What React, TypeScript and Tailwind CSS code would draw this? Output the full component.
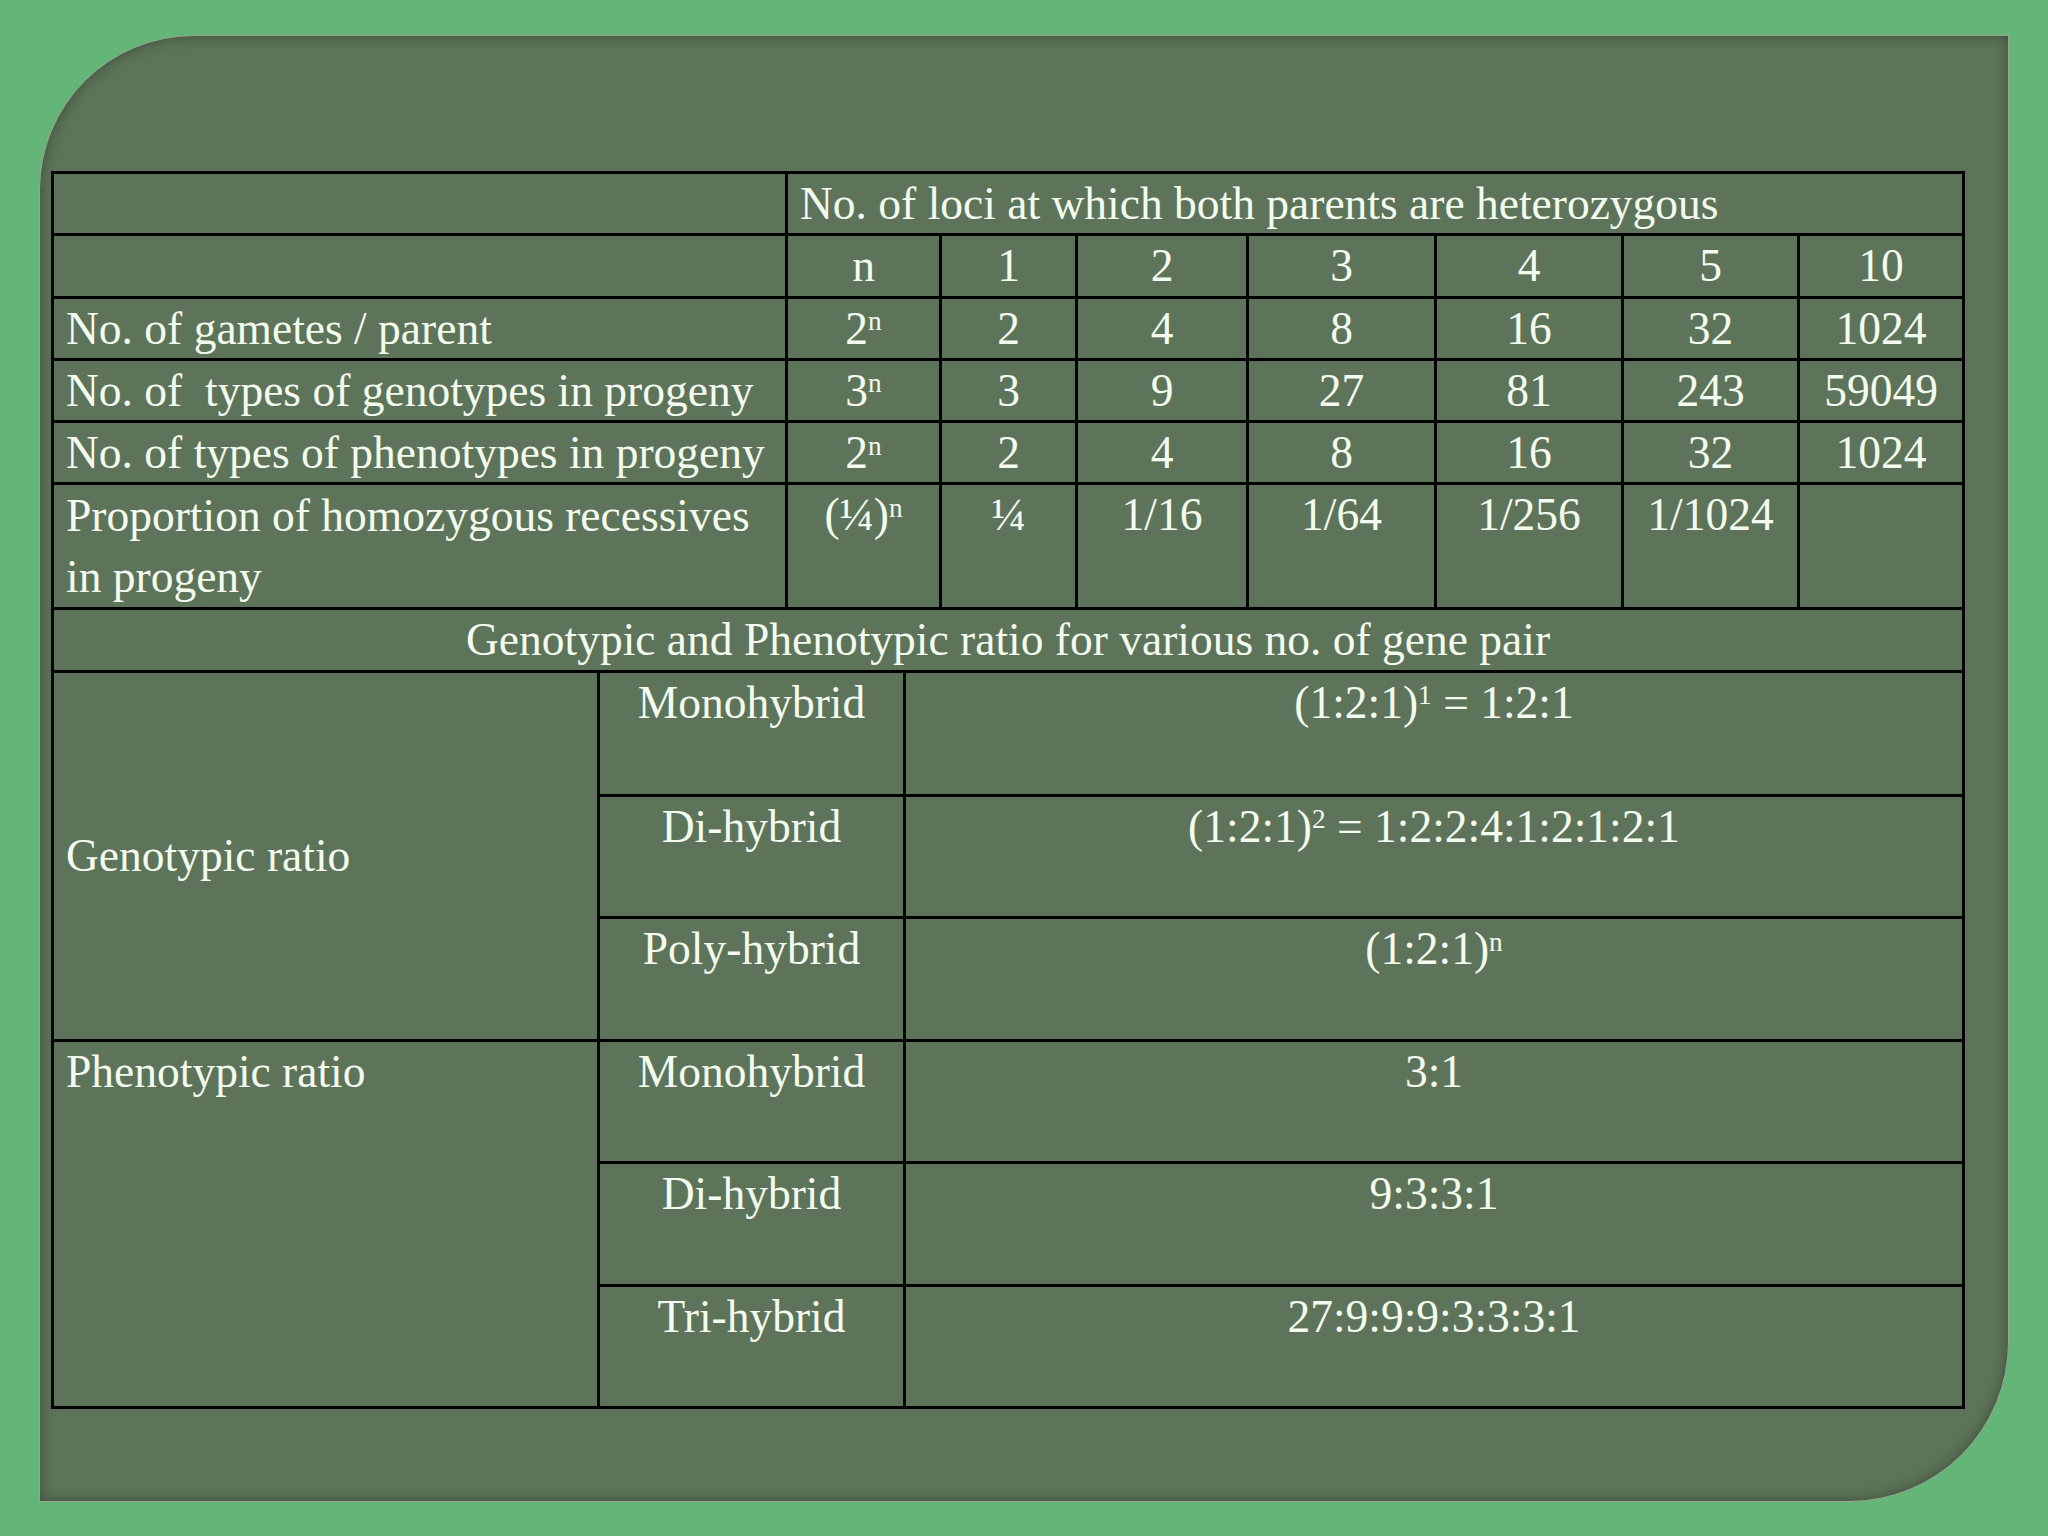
const topCols = [734, 154, 136, 171, 188, 187, 176, 165];
const bottomCols = [546, 306, 1059];

const cell = 'border-[3px] border-black p-0';

function Sup({ children }: { children: React.ReactNode }) {
	return <sup className="text-[0.6em]">{children}</sup>;
}

const dataRows: { label: React.ReactNode; values: React.ReactNode[] }[] = [
	{
		label: 'No. of gametes / parent',
		values: [<>2<Sup>n</Sup></>, '2', '4', '8', '16', '32', '1024'],
	},
	{
		label: 'No. of \u00a0types of genotypes in progeny',
		values: [<>3<Sup>n</Sup></>, '3', '9', '27', '81', '243', '59049'],
	},
	{
		label: 'No. of types of phenotypes in progeny',
		values: [<>2<Sup>n</Sup></>, '2', '4', '8', '16', '32', '1024'],
	},
];

const ratioRows = [
	{
		group: 'Genotypic ratio',
		items: [
			['Monohybrid', <>(1:2:1)<Sup>1</Sup> = 1:2:1</>],
			['Di-hybrid', <>(1:2:1)<Sup>2</Sup> = 1:2:2:4:1:2:1:2:1</>],
			['Poly-hybrid', <>(1:2:1)<Sup>n</Sup></>],
		],
	},
	{
		group: 'Phenotypic ratio',
		items: [
			['Monohybrid', '3:1'],
			['Di-hybrid', '9:3:3:1'],
			['Tri-hybrid', '27:9:9:9:3:3:3:1'],
		],
	},
];

export default function App() {
	return (
		<div
			className="h-[1536px] w-[2048px] bg-[#63b578] pb-[34px] pl-[39px] pr-[39px] pt-[35px] font-['Liberation_Serif',serif]"
			style={{ fontFamily: '"Liberation Serif", "Times New Roman", serif' }}
		>
			<div className="h-full w-full rounded-br-[160px] rounded-tl-[155px] border border-[#9aa58e] bg-[#5e745a] pl-[11px] pt-[135px] text-[45.5px] leading-[58px] text-[#f3faee] shadow-[inset_0_0_14px_rgba(30,45,30,0.55)]">
				<table className="w-[1911px] table-fixed border-collapse">
					<colgroup>
						{topCols.map((w, i) => (
							<col key={i} style={{ width: w }} />
						))}
					</colgroup>
					<tbody>
						<tr className="h-[62.3px]">
							<td className={`${cell} align-top`}></td>
							<td className={`${cell} align-top pl-[12px] pt-[1px]`} colSpan={7}>
								No. of loci at which both parents are heterozygous
							</td>
						</tr>
						<tr className="h-[62.3px]">
							<td className={`${cell} align-top`}></td>
							{['n', '1', '2', '3', '4', '5', '10'].map((v) => (
								<td key={v} className={`${cell} align-top pt-[1px] text-center`}>
									{v}
								</td>
							))}
						</tr>
						{dataRows.map((row, i) => (
							<tr key={i} className="h-[62.3px]">
								<td className={`${cell} align-top whitespace-nowrap pl-[12px] pt-[1px]`}>
									{row.label}
								</td>
								{row.values.map((v, j) => (
									<td key={j} className={`${cell} align-top pt-[1px] text-center`}>
										{v}
									</td>
								))}
							</tr>
						))}
						<tr className="h-[124.6px]">
							<td className={`${cell} align-top pl-[12px] leading-[61px]`}>
								Proportion of homozygous recessives in progeny
							</td>
							{[
								<>(¼)<Sup>n</Sup></>,
								'¼',
								'1/16',
								'1/64',
								'1/256',
								'1/1024',
								'',
							].map((v, j) => (
								<td key={j} className={`${cell} align-top pt-[1px] text-center`}>
									{v}
								</td>
							))}
						</tr>
						<tr className="h-[62.3px]">
							<td className={`${cell} align-top pt-[1px] text-center`} colSpan={8}>
								Genotypic and Phenotypic ratio for various no. of gene pair
							</td>
						</tr>
					</tbody>
				</table>
				<table className="w-[1911px] table-fixed border-collapse">
					<colgroup>
						{bottomCols.map((w, i) => (
							<col key={i} style={{ width: w }} />
						))}
					</colgroup>
					<tbody>
						{ratioRows.map((group, gi) =>
							group.items.map(([name, value], i) => (
								<tr key={`${gi}-${i}`} className="h-[122.5px]">
									{i === 0 && (
										<td
											rowSpan={3}
											className={`${cell} border-t-0 pl-[12px] ${gi === 0 ? 'align-middle' : 'align-top pt-[1px]'}`}
										>
											{group.group}
										</td>
									)}
									<td
										className={`${cell} align-top pt-[1px] text-center ${gi === 0 && i === 0 ? 'border-t-0' : ''}`}
									>
										{name}
									</td>
									<td
										className={`${cell} align-top pt-[1px] text-center ${gi === 0 && i === 0 ? 'border-t-0' : ''}`}
									>
										{value}
									</td>
								</tr>
							)),
						)}
					</tbody>
				</table>
			</div>
		</div>
	);
}
